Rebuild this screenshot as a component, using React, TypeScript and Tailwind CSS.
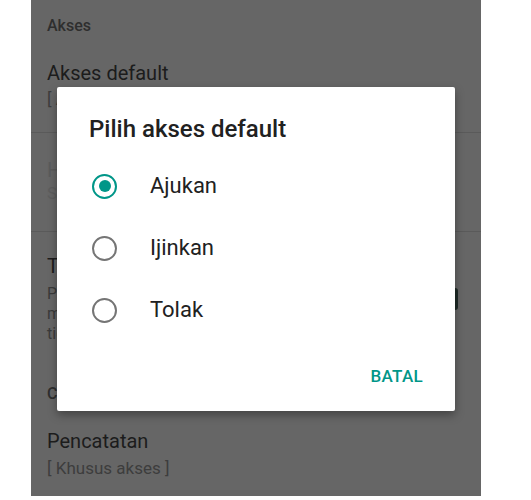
import React from "react";

const options = [
  { label: "Ajukan", selected: true },
  { label: "Ijinkan", selected: false },
  { label: "Tolak", selected: false },
];

const Radio = ({ selected }: { selected: boolean }) => (
  <div
    className={
      selected
        ? "flex h-[25px] w-[25px] items-center justify-center rounded-full border-[2.5px] border-[#009688]"
        : "flex h-[25px] w-[25px] items-center justify-center rounded-full border-[2.5px] border-[#757575]"
    }
  >
    {selected && <div className="h-[12px] w-[12px] rounded-full bg-[#009688]" />}
  </div>
);

const Dialog = () => (
  <div className="absolute left-[26px] top-[87px] flex h-[324px] w-[398px] flex-col rounded-[2px] bg-white pt-[26px] shadow-[0_4px_10px_rgba(0,0,0,0.35)]">
    <div className="pl-[32px] text-[24px] font-medium leading-[32px] text-[#212121]">
      Pilih akses default
    </div>
    <div className="mt-[10px] flex flex-col">
      {options.map((opt) => (
        <div key={opt.label} className="flex h-[62px] items-center pl-[35px]">
          <Radio selected={opt.selected} />
          <span className="ml-[33px] text-[22px] leading-[28px] text-[#212121]">{opt.label}</span>
        </div>
      ))}
    </div>
    <div className="mt-[25px] flex justify-end pr-[32px]">
      <span className="text-[17px] font-medium leading-[20px] tracking-[0.3px] text-[#009688]">BATAL</span>
    </div>
  </div>
);

export default function App() {
  return (
    <div className="flex h-[500px] w-[531px] bg-white font-['Roboto',sans-serif]">
      <div className="w-[31px] shrink-0" />
      <div className="relative h-[496px] w-[450px] shrink-0 overflow-hidden bg-[#666666]">
        <div className="flex flex-col">
          <div className="pl-[16px] pt-[16px] text-[16px] font-medium leading-[20px] text-[#2e2e2e]">Akses</div>
          <div className="mt-[25px] pl-[16px] text-[20px] leading-[24px] text-[#1c1c1c]">Akses default</div>
          <div className="mt-[3px] pl-[16px] text-[17px] leading-[22px] text-[#3d3d3d]">[ Ajukan ]</div>
          <div className="mt-[22px] h-px bg-[#5a5a5a]" />
          <div className="mt-[25px] pl-[16px] text-[20px] leading-[24px] text-[#5b5b5b]">Hapus izin</div>
          <div className="pl-[16px] text-[17px] leading-[22px] text-[#5d5d5d]">Semua izin</div>
          <div className="mt-[27px] h-px bg-[#5a5a5a]" />
          <div className="flex items-start justify-between pr-[23px]">
            <div className="flex flex-col pl-[16px]">
              <div className="mt-[22px] text-[20px] leading-[24px] text-[#1c1c1c]">Tampilkan notifikasi</div>
              <div className="mt-[6px] text-[16px] leading-[20px] text-[#3a3a3a]">
                Perlihatkan notifikasi saat aplikasi
                <br />
                meminta akses yang sebelumnya
                <br />
                tidak diizinkan
              </div>
            </div>
            <div className="mt-[56px] h-[22px] w-[36px] rounded-[3px] bg-[#1e2a27]" />
          </div>
          <div className="mt-[40px] pl-[16px] text-[16px] font-medium leading-[20px] text-[#2e2e2e]">Catatan</div>
          <div className="mt-[25px] pl-[16px] text-[20px] leading-[24px] text-[#1c1c1c]">Pencatatan</div>
          <div className="mt-[4px] pl-[16px] text-[17px] leading-[22px] text-[#3d3d3d]">[ Khusus akses ]</div>
        </div>
        <Dialog />
      </div>
      <div className="flex-1" />
    </div>
  );
}
